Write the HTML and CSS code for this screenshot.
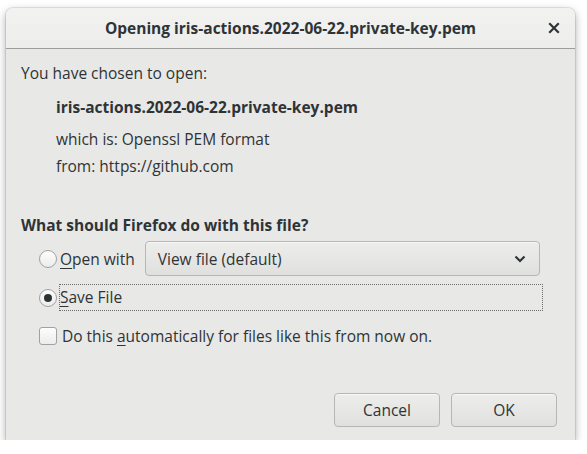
FILE: index.html
```html
<!DOCTYPE html>
<html>
<head>
<meta charset="utf-8">
<link rel="stylesheet" href="styles.css">
</head>
<body>
<div class="window">
  <div class="titlebar">
    <div class="title">Opening iris-actions.2022-06-22.private-key.pem</div>
    <div class="close">
      <svg width="12" height="12" viewBox="0 0 12 12"><path d="M2 2 L10 10 M10 2 L2 10" stroke="#2e3436" stroke-width="2.2" stroke-linecap="square"/></svg>
    </div>
  </div>
  <div class="content">
    <div class="intro">You have chosen to open:</div>
    <div class="fileinfo">
      <div class="filename">iris-actions.2022-06-22.private-key.pem</div>
      <div class="line first">which is: Openssl PEM format</div>
      <div class="line">from: https://github.com</div>
    </div>
    <div class="question">What should Firefox do with this file?</div>
    <div class="options">
      <div class="row open-row">
        <span class="radio"></span>
        <span class="label"><u>O</u>pen with</span>
        <div class="dropdown">
          <span>View file (default)</span>
          <svg width="14" height="10" viewBox="0 0 14 10"><path d="M2.5 2.5 L7 7 L11.5 2.5" fill="none" stroke="#2e3436" stroke-width="2.2"/></svg>
        </div>
      </div>
      <div class="row save-row">
        <span class="radio checked"></span>
        <span class="label focus"><u>S</u>ave File</span>
      </div>
      <div class="row auto-row">
        <span class="checkbox"></span>
        <span class="label">Do this <u>a</u>utomatically for files like this from now on.</span>
      </div>
    </div>
    <div class="buttons">
      <button class="btn">Cancel</button>
      <button class="btn">OK</button>
    </div>
  </div>
</div>
</body>
</html>
```
FILE: styles.css
```css
html, body {
  margin: 0;
  padding: 0;
  background: #ffffff;
}
body {
  padding: 8px 0 0 6px;
  font-family: "Open Sans", "Noto Sans", sans-serif;
  font-size: 15.5px;
  color: #2e3436;
}
.window {
  width: 569px;
  height: 432px;
  background: #e8e8e7;
  border-radius: 7px 7px 0 0;
  box-shadow: 0 3px 9px rgba(0,0,0,0.35), 0 0 0 1px rgba(0,0,0,0.08);
  display: flex;
  flex-direction: column;
  box-sizing: border-box;
}
.titlebar {
  height: 40px;
  flex: none;
  background: linear-gradient(#f2f2f1, #ededec);
  border-bottom: 1px solid #9d9d9c;
  border-radius: 7px 7px 0 0;
  display: flex;
  align-items: center;
  justify-content: center;
  position: relative;
}
.title {
  font-weight: bold;
  font-size: 15.5px;
}
.close {
  position: absolute;
  right: 15px;
  top: 14px;
  width: 12px;
  height: 12px;
}
.close svg { display: block; }
.content {
  flex: 1;
  padding: 13px 0 0 15px;
  display: flex;
  flex-direction: column;
}
.intro {
  line-height: 22px;
}
.fileinfo {
  padding-left: 35px;
  margin-top: 12px;
}
.filename {
  font-weight: bold;
  line-height: 22px;
}
.line {
  line-height: 27px;
}
.line.first { margin-top: 8px; }
.question {
  font-weight: bold;
  margin-top: 34px;
  line-height: 22px;
}
.options {
  padding-left: 18px;
  margin-top: 5px;
}
.row {
  display: flex;
  align-items: center;
}
.open-row {
  height: 35px;
  margin-right: 35px;
}
.radio {
  width: 16px;
  height: 16px;
  border: 1px solid #a1a1a0;
  border-radius: 50%;
  background: linear-gradient(#fdfdfd, #ececec);
  flex: none;
  position: relative;
  margin-right: 3px;
}
.radio.checked::after {
  content: "";
  position: absolute;
  left: 4px;
  top: 4px;
  width: 8px;
  height: 8px;
  border-radius: 50%;
  background: #2e3436;
}
.label u { text-decoration: underline; text-underline-offset: 3px; }
.dropdown {
  margin-left: 10px;
  flex: 1;
  height: 35px;
  box-sizing: border-box;
  border: 1px solid #b6b6b3;
  border-radius: 4px;
  background: linear-gradient(#ededec, #e0e0df);
  box-shadow: 0 1px 0 rgba(255,255,255,0.6) inset;
  display: flex;
  align-items: center;
  justify-content: space-between;
  padding: 0 12px 0 12px;
}
.dropdown svg { display: block; }
.save-row {
  margin-top: 9px;
  height: 25px;
}
.label.focus {
  flex: 1;
  height: 25px;
  line-height: 25px;
  box-sizing: border-box;
  outline: 1px dotted #6b6b6b;
  outline-offset: 0;
  margin-right: 33px;
}
.auto-row {
  margin-top: 15px;
}
.checkbox {
  width: 16px;
  height: 16px;
  border: 1px solid #a1a1a0;
  border-radius: 3px;
  background: linear-gradient(#fdfdfd, #ececec);
  flex: none;
  margin-right: 5px;
}
.buttons {
  margin-top: auto;
  margin-bottom: 13px;
  align-self: flex-end;
  margin-right: 18px;
  display: flex;
  gap: 11px;
}
.btn {
  font-family: inherit;
  font-size: 15.5px;
  color: #2e3436;
  width: 106px;
  height: 34px;
  border: 1px solid #b6b6b3;
  border-radius: 4px;
  background: linear-gradient(#ededec, #e0e0df);
  box-shadow: 0 1px 0 rgba(255,255,255,0.6) inset;
  padding: 0;
}
```
